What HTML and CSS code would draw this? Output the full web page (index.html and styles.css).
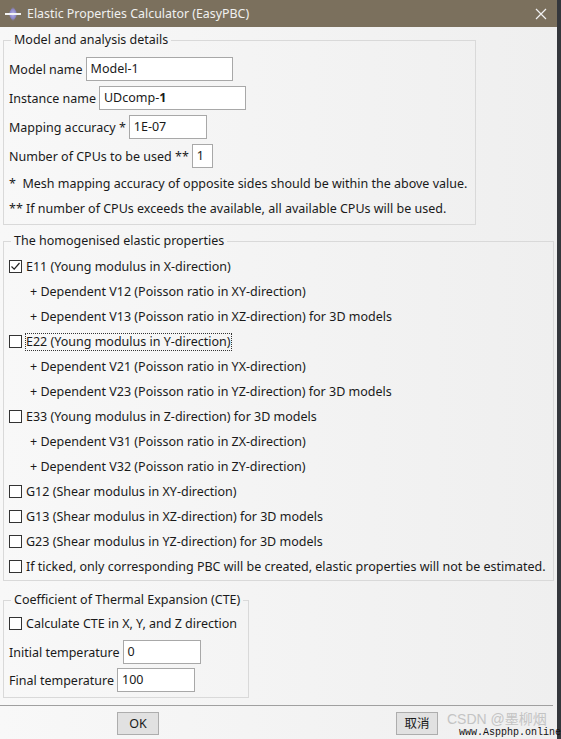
FILE: index.html
```html
<!DOCTYPE html>
<html>
<head>
<meta charset="utf-8">
<link rel="stylesheet" href="styles.css">
</head>
<body>
<div class="window">
  <div class="titlebar">
    <svg class="app-icon" width="16" height="16" viewBox="0 0 16 16">
      <defs>
        <radialGradient id="g" cx="50%" cy="50%" r="50%">
          <stop offset="0%" stop-color="#b9b4e8"/>
          <stop offset="60%" stop-color="#8c86c8"/>
          <stop offset="100%" stop-color="#7b705d" stop-opacity="0"/>
        </radialGradient>
      </defs>
      <path d="M8 0 L13 8 L8 16 L3 8 Z" fill="url(#g)"/>
      <rect x="0" y="7" width="16" height="2" fill="#f4f4f4"/>
    </svg>
    <span class="title">Elastic Properties Calculator (EasyPBC)</span>
    <svg class="close" width="12" height="12" viewBox="0 0 12 12">
      <path d="M1 1 L11 11 M11 1 L1 11" stroke="#f2f2f2" stroke-width="1.2"/>
    </svg>
  </div>

  <div class="content">
    <fieldset class="group g1">
      <legend>Model and analysis details</legend>
      <div class="field"><span>Model name</span><div class="input w-model">Model-1</div></div>
      <div class="field"><span>Instance name</span><div class="input w-model">UDcomp-<b>1</b></div></div>
      <div class="field"><span>Mapping accuracy *</span><div class="input w-acc">1E-07</div></div>
      <div class="field"><span>Number of CPUs to be used **</span><div class="input w-cpu">1</div></div>
      <div class="note first">*&nbsp; Mesh mapping accuracy of opposite sides should be within the above value.</div>
      <div class="note">** If number of CPUs exceeds the available, all available CPUs will be used.</div>
    </fieldset>

    <fieldset class="group g2">
      <legend>The homogenised elastic properties</legend>
      <div class="row"><span class="cb checked"><svg width="11" height="11" viewBox="0 0 11 11"><path d="M1.5 5.5 L4.2 8.2 L9.5 2" fill="none" stroke="#222" stroke-width="1.2"/></svg></span><span>E11 (Young modulus in X-direction)</span></div>
      <div class="row sub">+ Dependent V12 (Poisson ratio in XY-direction)</div>
      <div class="row sub">+ Dependent V13 (Poisson ratio in XZ-direction) for 3D models</div>
      <div class="row"><span class="cb"></span><span class="focus">E22 (Young modulus in Y-direction)</span></div>
      <div class="row sub">+ Dependent V21 (Poisson ratio in YX-direction)</div>
      <div class="row sub">+ Dependent V23 (Poisson ratio in YZ-direction) for 3D models</div>
      <div class="row"><span class="cb"></span><span>E33 (Young modulus in Z-direction) for 3D models</span></div>
      <div class="row sub">+ Dependent V31 (Poisson ratio in ZX-direction)</div>
      <div class="row sub">+ Dependent V32 (Poisson ratio in ZY-direction)</div>
      <div class="row"><span class="cb"></span><span>G12 (Shear modulus in XY-direction)</span></div>
      <div class="row"><span class="cb"></span><span>G13 (Shear modulus in XZ-direction) for 3D models</span></div>
      <div class="row"><span class="cb"></span><span>G23 (Shear modulus in YZ-direction) for 3D models</span></div>
      <div class="row"><span class="cb"></span><span>If ticked, only corresponding PBC will be created, elastic properties will not be estimated.</span></div>
    </fieldset>

    <fieldset class="group g3">
      <legend>Coefficient of Thermal Expansion (CTE)</legend>
      <div class="row"><span class="cb"></span><span>Calculate CTE in X, Y, and Z direction</span></div>
      <div class="field f3"><span>Initial temperature</span><div class="input w-temp">0</div></div>
      <div class="field f3"><span>Final temperature</span><div class="input w-temp">100</div></div>
    </fieldset>

    <div class="separator"></div>

    <div class="buttons">
      <div class="btn">OK</div>
      <div class="btn">取消</div>
    </div>
  </div>

  <div class="watermark">CSDN @墨柳烟</div>
  <div class="watermark2">www.Aspphp.online</div>
</div>
</body>
</html>
```

FILE: styles.css
```css
html, body {
  margin: 0;
  padding: 0;
}
body {
  width: 561px;
  height: 739px;
  overflow: hidden;
  font-family: "Noto Sans", "Noto Sans CJK SC", sans-serif;
  font-size: 12.5px;
  color: #1a1a1a;
}
.window {
  position: relative;
  width: 557px;
  height: 739px;
  border-right: 4px solid #34373c;
  background: linear-gradient(to right, #f8f8f8, #efefef);
}
.titlebar {
  height: 27px;
  background: #7b705d;
  display: flex;
  align-items: center;
  padding-left: 5px;
  color: #f0f0f0;
}
.app-icon {
  flex: none;
}
.title {
  margin-left: 6px;
  font-size: 12.4px;
  flex: 1;
}
.close {
  margin-right: 10px;
}
.content {
  padding-left: 3px;
}
.group {
  box-sizing: border-box;
  margin: 0;
  border: 1px solid #d9d9d9;
  padding: 0 5px;
}
.group legend {
  margin-left: 2px;
  padding: 0 3px;
  line-height: 18px;
  white-space: nowrap;
}
.g1 {
  width: 473px;
  margin-top: 4px;
  padding-top: 8px;
  padding-bottom: 3px;
}
.g2 {
  width: 551px;
  margin-top: 7px;
  padding-top: 4px;
  padding-bottom: 1px;
}
.g3 {
  width: 244px;
  margin-top: 10px;
  padding-top: 2px;
  padding-bottom: 5px;
}
.field {
  display: flex;
  align-items: center;
  height: 24px;
  gap: 3px;
  white-space: nowrap;
}
.field + .field {
  margin-top: 5px;
}
.f3 {
  margin-top: 4px;
}
.f3 + .f3 {
  margin-top: 4px;
}
.input {
  box-sizing: border-box;
  height: 24px;
  background: #fff;
  border: 1px solid #a8a8a8;
  padding-left: 4px;
  line-height: 22px;
}
.input b {
  font-weight: 700;
}
.w-model { width: 147px; }
.w-acc { width: 78px; }
.w-cpu { width: 21px; }
.w-temp { width: 78px; }
.note {
  height: 25px;
  line-height: 25px;
  white-space: nowrap;
}
.note.first {
  margin-top: 3px;
}
.row {
  display: flex;
  align-items: center;
  height: 25px;
  white-space: nowrap;
}
.row.sub {
  padding-left: 21px;
}
.cb {
  box-sizing: border-box;
  flex: none;
  width: 13px;
  height: 13px;
  border: 1px solid #333;
  background: #fff;
  margin-right: 4px;
  display: flex;
  align-items: center;
  justify-content: center;
}
.cb svg {
  display: block;
}
.focus {
  outline: 1px dotted #333;
  outline-offset: 0;
  padding: 0 1px 0 0;
  line-height: 16px;
}
.separator {
  margin-top: 7px;
  margin-left: -3px;
  width: 553px;
  height: 1px;
  background: #a0a0a0;
}
.buttons {
  display: flex;
  padding-top: 6px;
  padding-left: 114px;
  gap: 237px;
}
.btn {
  box-sizing: border-box;
  width: 42px;
  height: 23px;
  background: #e1e1e1;
  border: 1px solid #adadad;
  text-align: center;
  line-height: 21px;
}
.watermark {
  position: absolute;
  left: 447px;
  top: 711px;
  font-family: "Liberation Sans", "Noto Sans CJK SC", sans-serif;
  font-size: 14px;
  line-height: 17px;
  color: #c4c4c4;
  white-space: nowrap;
}
.watermark2 {
  position: absolute;
  left: 459px;
  top: 727px;
  font-family: "Liberation Mono", monospace;
  font-size: 10px;
  line-height: 12px;
  color: #111;
  white-space: nowrap;
}
```
